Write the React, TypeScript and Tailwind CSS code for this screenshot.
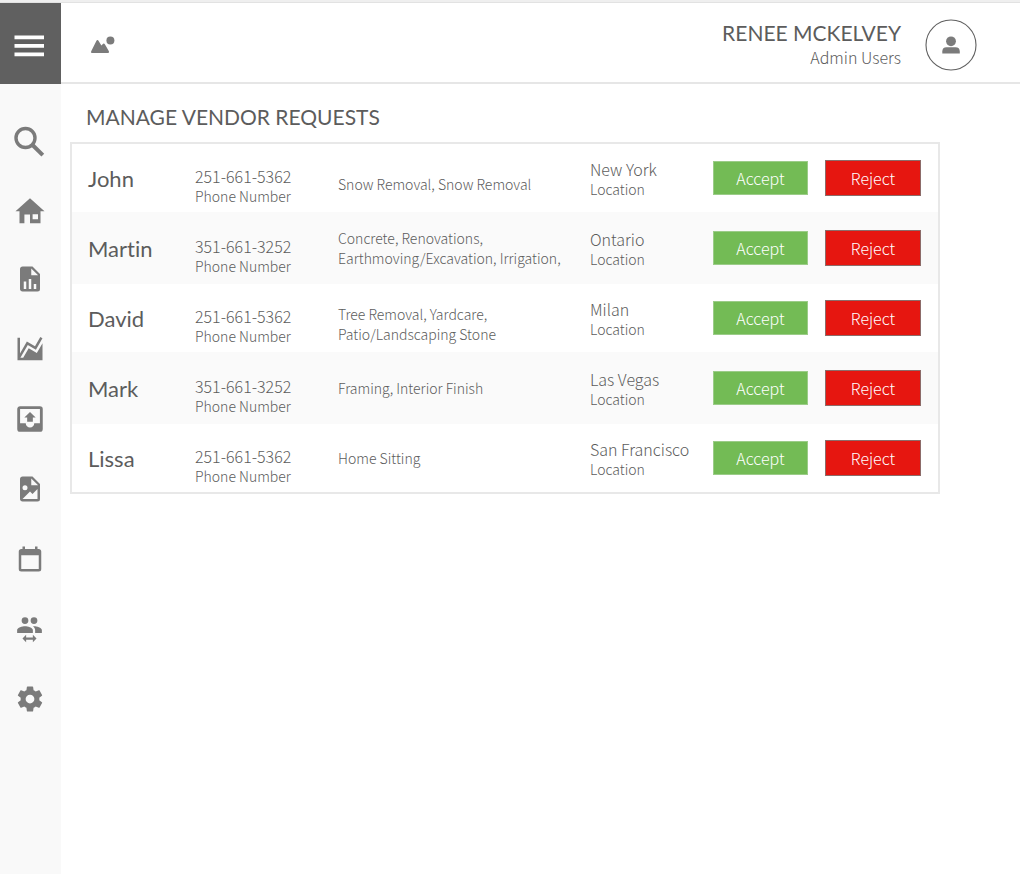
import type { ReactNode } from "react";

type Vendor = {
  name: string;
  phone: string;
  services: string[];
  location: string;
  lowered?: boolean;
};

const vendors: Vendor[] = [
  { name: "John", phone: "251-661-5362", services: ["Snow Removal, Snow Removal"], location: "New York", lowered: true },
  { name: "Martin", phone: "351-661-3252", services: ["Concrete, Renovations,", "Earthmoving/Excavation, Irrigation,"], location: "Ontario" },
  { name: "David", phone: "251-661-5362", services: ["Tree Removal, Yardcare,", "Patio/Landscaping Stone"], location: "Milan", lowered: true },
  { name: "Mark", phone: "351-661-3252", services: ["Framing, Interior Finish"], location: "Las Vegas" },
  { name: "Lissa", phone: "251-661-5362", services: ["Home Sitting"], location: "San Francisco" },
];

const light = "font-['Noto_Sans_CJK_SC',sans-serif] font-light";

function Glyph({ d, className = "size-[30px]", viewBox = "0 0 24 24" }: { d: string; className?: string; viewBox?: string }) {
  return (
    <svg viewBox={viewBox} className={className} fill="currentColor" fillRule="evenodd" aria-hidden="true">
      <path d={d} />
    </svg>
  );
}

const navItems: { label: string; icon: ReactNode }[] = [
  {
    label: "Search",
    icon: (
      <svg viewBox="0 0 44 44" className="size-11" aria-hidden="true" fill="none" stroke="currentColor">
        <circle cx="17.5" cy="21" r="9.5" strokeWidth="3.4" />
        <path d="M24.5 28 34.8 38.2" strokeWidth="4" />
      </svg>
    ),
  },
  {
    label: "Home",
    icon: (
      <Glyph
        viewBox="0 0 30 30"
        d="M15 4.3 29.5 17.2H25.5V29.3H15V20.5H9.4V29.3H4.5V17.2H.5ZM17.6 20.2V25.2H23V20.2Z"
      />
    ),
  },
  {
    label: "Reports",
    icon: (
      <Glyph d="M13,9H18.5L13,3.5V9M6,2H14L20,8V20A2,2 0 0,1 18,22H6C4.89,22 4,21.1 4,20V4C4,2.89 4.89,2 6,2M7,20H9V14H7V20M11,20H13V12H11V20M15,20H17V16H15V20Z" />
    ),
  },
  {
    label: "Analytics",
    icon: (
      <Glyph d="M17.45,15.18L22,7.31V21H2V3H4V15.54L9.5,6L16,9.78L20.24,2.45L21.97,3.45L16.74,12.5L10.23,8.75L4.31,19H6.57L10.96,11.44L17.45,15.18Z" />
    ),
  },
  {
    label: "Outbox",
    icon: (
      <Glyph
        className="size-[34px]"
        d="M14,14H10V11H8L12,7L16,11H14V14M5,15V5H19V15H15A3,3 0 0,1 12,18A3,3 0 0,1 9,15H5M19,3H5C3.89,3 3,3.9 3,5V19A2,2 0 0,0 5,21H19A2,2 0 0,0 21,19V5A2,2 0 0,0 19,3Z"
      />
    ),
  },
  {
    label: "Images",
    icon: (
      <Glyph d="M13,9H18.5L13,3.5V9M6,2H14L20,8V20A2,2 0 0,1 18,22H6C4.89,22 4,21.1 4,20V4C4,2.89 4.89,2 6,2M6,20H18V12L14,16L12,14L6,20M8,9A2,2 0 0,0 6,11A2,2 0 0,0 8,13A2,2 0 0,0 10,11A2,2 0 0,0 8,9Z" />
    ),
  },
  {
    label: "Calendar",
    icon: (
      <Glyph
        viewBox="0 -1 24 24"
        d="M19,19H5V8H19M16,1V3H8V1H6V3H5C3.89,3 3,3.89 3,5V19A2,2 0 0,0 5,21H19A2,2 0 0,0 21,19V5C21,3.89 20.1,3 19,3H18V1Z"
      />
    ),
  },
  {
    label: "Users",
    icon: (
      <Glyph
        className="size-[27px]"
        d="M16,9C18.33,9 23,10.17 23,12.5V15H17V12.5C17,11 16.19,9.89 15.04,9.05L16,9M8,9C10.33,9 15,10.17 15,12.5V15H1V12.5C1,10.17 5.67,9 8,9M8,7A3,3 0 0,1 5,4A3,3 0 0,1 8,1A3,3 0 0,1 11,4A3,3 0 0,1 8,7M16,7A3,3 0 0,1 13,4A3,3 0 0,1 16,1A3,3 0 0,1 19,4A3,3 0 0,1 16,7M9,16.75V19H15V16.75L18.25,20L15,23.25V21H9V23.25L5.75,20L9,16.75Z"
      />
    ),
  },
  {
    label: "Settings",
    icon: (
      <Glyph d="M12,15.5A3.5,3.5 0 0,1 8.5,12A3.5,3.5 0 0,1 12,8.5A3.5,3.5 0 0,1 15.5,12A3.5,3.5 0 0,1 12,15.5M19.43,12.97C19.47,12.65 19.5,12.33 19.5,12C19.5,11.67 19.47,11.34 19.43,11L21.54,9.37C21.73,9.22 21.78,8.95 21.66,8.73L19.66,5.27C19.54,5.05 19.27,4.96 19.05,5.05L16.56,6.05C16.04,5.66 15.5,5.32 14.87,5.07L14.5,2.42C14.46,2.18 14.25,2 14,2H10C9.75,2 9.54,2.18 9.5,2.42L9.13,5.07C8.5,5.32 7.96,5.66 7.44,6.05L4.95,5.05C4.73,4.96 4.46,5.05 4.34,5.27L2.34,8.73C2.21,8.95 2.27,9.22 2.46,9.37L4.57,11C4.53,11.34 4.5,11.67 4.5,12C4.5,12.33 4.53,12.65 4.57,12.97L2.46,14.63C2.27,14.78 2.21,15.05 2.34,15.27L4.34,18.73C4.46,18.95 4.73,19.03 4.95,18.95L7.44,17.94C7.96,18.34 8.5,18.68 9.13,18.93L9.5,21.58C9.54,21.82 9.75,22 10,22H14C14.25,22 14.46,21.82 14.5,21.58L14.87,18.93C15.5,18.67 16.04,18.34 16.56,17.94L19.05,18.95C19.27,19.03 19.54,18.95 19.66,18.73L21.66,15.27C21.78,15.05 21.73,14.78 21.54,14.63L19.43,12.97Z" />
    ),
  },
];

function Sidebar() {
  return (
    <aside className="flex w-[61px] shrink-0 flex-col bg-[#f9f9f9]">
      <button type="button" aria-label="Menu" className="flex h-[81px] items-center justify-center bg-[#606060] pt-1 pr-1 text-white">
        <svg viewBox="0 0 30 22" className="h-[22px] w-[30px]" fill="currentColor" aria-hidden="true">
          <path d="M.5 .5H30V4.2H.5ZM.5 9H30V12.7H.5ZM.5 17.5H30V21.2H.5Z" />
        </svg>
      </button>
      <nav className="flex flex-col pt-5 pr-0.5">
        {navItems.map((item) => (
          <a key={item.label} href="#" aria-label={item.label} className="flex h-[70px] items-center justify-center text-[#7b7b7b]">
            {item.icon}
          </a>
        ))}
      </nav>
    </aside>
  );
}

function Header() {
  return (
    <header className="flex h-[81px] items-center justify-between border-b-2 border-[#e6e6e6] pt-1 pr-[43px] pl-[29px]">
      <a href="#" aria-label="Dashboard" className="text-[#7b7b7b]">
        <svg viewBox="0 0 26 18" className="h-[18px] w-[26px]" fill="currentColor" aria-hidden="true">
          <circle cx="20.4" cy="4.5" r="4" />
          <path d="M2 17Q.3 17 1.2 15.3L6.2 5.2Q7.4 2.8 8.8 5.2L11.4 9.6 12.6 8.2Q13.9 6.7 15 8.5L18.9 15.3Q19.6 17 18 17Z" />
        </svg>
      </a>
      <div className="flex items-center gap-6">
        <div className="text-right text-[#5c5c5c]">
          <p className="font-[Lato,sans-serif] text-[21px] leading-6">RENEE MCKELVEY</p>
          <p className={`${light} text-base leading-6`}>Admin Users</p>
        </div>
        <button type="button" aria-label="Account" className="text-[#7b7b7b]">
          <svg viewBox="0 0 52 52" className="size-[52px]" fill="currentColor" aria-hidden="true">
            <circle cx="26" cy="26" r="25" fill="none" stroke="#606060" strokeWidth="1.1" />
            <circle cx="26" cy="22.3" r="4.9" />
            <path d="M17.3 34.6V32.5Q17.3 28.2 21.5 28.2H30.5Q34.8 28.2 34.8 32.5V34.6Z" />
          </svg>
        </button>
      </div>
    </header>
  );
}

function VendorRow({ vendor }: { vendor: Vendor }) {
  return (
    <tr className="h-[68px] even:h-[72px] even:bg-[#fafafa]">
      <th
        scope="row"
        className="pt-0.5 pl-4 text-left font-[Lato,sans-serif] text-[22px] leading-6 font-normal [font-variant-ligatures:none]"
      >
        {vendor.name}
      </th>
      <td className="pt-4">
        <p className="text-base leading-5">{vendor.phone}</p>
        <p>Phone Number</p>
      </td>
      <td className={vendor.lowered ? "pt-3" : ""}>
        {vendor.services.map((line) => (
          <p key={line}>{line}</p>
        ))}
      </td>
      <td className="pt-0.5">
        <p className="text-base leading-5">{vendor.location}</p>
        <p>Location</p>
      </td>
      <td className="pr-[17px]">
        <div className="flex items-center justify-between text-base leading-5 text-white">
          <button type="button" className="h-[34px] w-[95px] border border-[#9bcc88] bg-[#73bb55]">Accept</button>
          <button type="button" className="h-9 w-24 border border-[#8c6b69] bg-[#e61610]">Reject</button>
        </div>
      </td>
    </tr>
  );
}

export default function App() {
  return (
    <div className="flex min-h-screen flex-col bg-white">
      <div className="h-[3px] border-b border-[#e2e2e2] bg-[#efefef]" />
      <div className="flex flex-1">
        <Sidebar />
        <div className="flex min-w-0 flex-1 flex-col">
          <Header />
          <main className="pt-[19px] pr-20 pl-[9px] text-[#5c5c5c]">
            <h1 className="px-4 font-[Lato,sans-serif] text-[21px] leading-7">MANAGE VENDOR REQUESTS</h1>
            <div className="mt-[11px] border-2 border-[#e8e8e8]">
              <table aria-label="Vendor requests" className={`${light} w-full table-fixed border-collapse text-sm leading-5`}>
                <colgroup>
                  <col className="w-[123px]" />
                  <col className="w-[143px]" />
                  <col />
                  <col className="w-[123px]" />
                  <col className="w-[225px]" />
                </colgroup>
                <tbody>
                  {vendors.map((vendor) => (
                    <VendorRow key={vendor.name} vendor={vendor} />
                  ))}
                </tbody>
              </table>
            </div>
          </main>
        </div>
      </div>
    </div>
  );
}
